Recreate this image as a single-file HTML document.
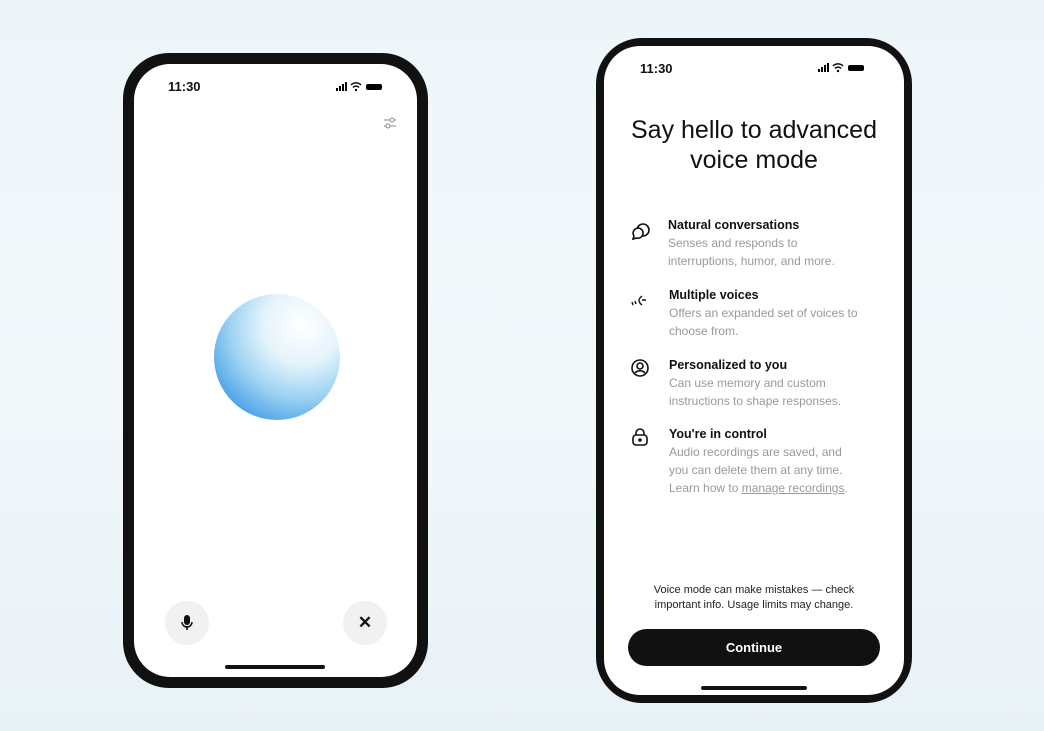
<!DOCTYPE html>
<html><head><style>
body{margin:0;width:1044px;height:731px;overflow:hidden;background:linear-gradient(180deg,#eef5f9 0%,#f3f8fb 50%,#e8f1f6 100%);font-family:"Liberation Sans",sans-serif;position:relative}
.ph{position:absolute;background:#111;border-radius:46px;box-sizing:border-box}
.scr{position:absolute;background:#fff;border-radius:36px;overflow:hidden}
.t{position:absolute;font-size:13px;font-weight:bold;color:#111}
.item{position:absolute;left:72px;font-size:12px;line-height:18px;color:#999}
.item b{color:#111;display:block;font-size:12.5px}
.ic{position:absolute;left:26px}
</style></head><body>
<div class="ph" style="left:123px;top:53px;width:305px;height:635px">
 <div class="scr" style="left:11px;top:11px;width:283px;height:613px">
  <div class="t" style="left:34px;top:15px">11:30</div>
  <svg style="position:absolute;left:202px;top:18px" width="54" height="10"><rect x="0" y="6" width="2" height="3"/><rect x="3" y="4" width="2" height="5"/><rect x="6" y="2" width="2" height="7"/><rect x="9" y="0" width="2" height="9" fill="#111"/><path d="M15 3a7 7 0 0 1 10 0M17 5.5a4 4 0 0 1 6 0" stroke="#111" stroke-width="1.5" fill="none"/><circle cx="20" cy="8" r="1.2"/><rect x="30" y="2" width="16" height="6" rx="2"/></svg>
  <svg style="position:absolute;left:249px;top:52px" width="14" height="14" stroke="#888" fill="none" stroke-width="1"><path d="M1 4h12M1 10h12"/><circle cx="9" cy="4" r="2" fill="#fff"/><circle cx="5" cy="10" r="2" fill="#fff"/></svg>
  <div style="position:absolute;left:80px;top:230px;width:126px;height:126px;border-radius:50%;background:radial-gradient(circle at 70% 25%,#ffffff 0%,#e4f4fb 30%,#9fd4f3 55%,#3e9ae6 85%,#2a86dc 100%)"></div>
  <div style="position:absolute;left:31px;top:537px;width:44px;height:44px;border-radius:50%;background:#f1f1f1"></div>
  <svg style="position:absolute;left:46px;top:551px" width="14" height="16" fill="#111"><rect x="4" y="0" width="6" height="10" rx="3"/><path d="M2 7a5 5 0 0 0 10 0" stroke="#111" stroke-width="1.5" fill="none"/><rect x="6.2" y="11" width="1.6" height="4"/></svg>
  <div style="position:absolute;left:209px;top:537px;width:44px;height:44px;border-radius:50%;background:#f1f1f1;text-align:center;line-height:44px;font-size:17px;font-weight:bold;color:#111">✕</div>
  <div style="position:absolute;left:91px;top:601px;width:100px;height:4px;border-radius:2px;background:#111"></div>
 </div>
</div>
<div class="ph" style="left:596px;top:38px;width:316px;height:665px">
 <div class="scr" style="left:8px;top:8px;width:300px;height:649px">
  <div class="t" style="left:36px;top:15px">11:30</div>
  <svg style="position:absolute;left:214px;top:17px" width="54" height="10"><rect x="0" y="6" width="2" height="3"/><rect x="3" y="4" width="2" height="5"/><rect x="6" y="2" width="2" height="7"/><rect x="9" y="0" width="2" height="9"/><path d="M15 3a7 7 0 0 1 10 0M17 5.5a4 4 0 0 1 6 0" stroke="#111" stroke-width="1.5" fill="none"/><circle cx="20" cy="8" r="1.2"/><rect x="30" y="2" width="16" height="6" rx="2"/></svg>
  <div style="position:absolute;left:0;top:69px;width:300px;text-align:center;font-size:25px;line-height:30px;color:#111">Say hello to advanced<br>voice mode</div>
  <svg class="ic" style="top:176px" width="22" height="20" fill="none" stroke="#111" stroke-width="1.6"><circle cx="13" cy="8" r="6"/><path d="M3 17l1-3a5 5 0 1 1 3 2z" fill="#fff"/></svg>
  <div class="item" style="top:170px;left:64px"><b>Natural conversations</b>Senses and responds to<br>interruptions, humor, and more.</div>
  <svg class="ic" style="top:248px" width="20" height="14" fill="none" stroke="#111" stroke-width="1.4"><path d="M2 8l1 3M5 7l1 3M12 2c-4 3-4 6 0 9M12 6h4"/></svg>
  <div class="item" style="top:240px;left:65px"><b>Multiple voices</b>Offers an expanded set of voices to<br>choose from.</div>
  <svg class="ic" style="top:312px" width="20" height="20" fill="none" stroke="#111" stroke-width="1.6"><circle cx="10" cy="10" r="8"/><circle cx="10" cy="8" r="3"/><path d="M5 15a6 5 0 0 1 10 0"/></svg>
  <div class="item" style="top:310px;left:65px"><b>Personalized to you</b>Can use memory and custom<br>instructions to shape responses.</div>
  <svg class="ic" style="top:381px" width="20" height="20" fill="none" stroke="#111" stroke-width="1.6"><rect x="3" y="8" width="14" height="10" rx="3"/><path d="M6 8V6a4 4 0 0 1 8 0v2"/><circle cx="10" cy="13" r="1" fill="#111"/></svg>
  <div class="item" style="top:379px;left:65px"><b>You're in control</b>Audio recordings are saved, and<br>you can delete them at any time.<br>Learn how to <u>manage recordings</u>.</div>
  <div style="position:absolute;left:0;top:537px;width:300px;text-align:center;font-size:11px;line-height:15px;color:#222">Voice mode can make mistakes — check<br>important info. Usage limits may change.</div>
  <div style="position:absolute;left:24px;top:583px;width:252px;height:37px;border-radius:19px;background:#111;color:#fff;text-align:center;line-height:37px;font-size:13px;font-weight:bold">Continue</div>
  <div style="position:absolute;left:97px;top:640px;width:106px;height:4px;border-radius:2px;background:#111"></div>
 </div>
</div>
</body></html>
